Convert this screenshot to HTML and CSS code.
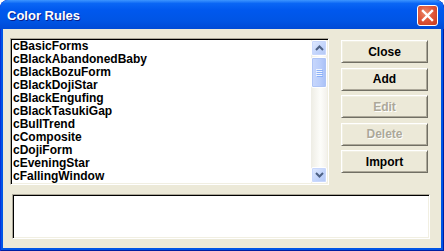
FILE: index.html
```html
<!DOCTYPE html>
<html lang="en">
<head>
    <meta charset="UTF-8">
    <title>Color Rules</title>
    <link rel="stylesheet" href="styles.css">
</head>
<body>
    <div class="window">
        <div class="titlebar">
            <span class="title">Color Rules</span>
            <div class="close-x">
                <svg width="13" height="13" viewBox="0 0 13 13">
                    <path d="M2 2 L11 11 M11 2 L2 11" stroke="#fff" stroke-width="2.4" stroke-linecap="square"/>
                </svg>
            </div>
        </div>
        <div class="client">
            <div class="top-row">
                <div class="listbox">
                    <ul class="items">
                        <li>cBasicForms</li>
                        <li>cBlackAbandonedBaby</li>
                        <li>cBlackBozuForm</li>
                        <li>cBlackDojiStar</li>
                        <li>cBlackEngufing</li>
                        <li>cBlackTasukiGap</li>
                        <li>cBullTrend</li>
                        <li>cComposite</li>
                        <li>cDojiForm</li>
                        <li>cEveningStar</li>
                        <li>cFallingWindow</li>
                    </ul>
                    <div class="scrollbar">
                        <div class="sb-btn">
                            <svg width="9" height="6" viewBox="0 0 9 6"><path d="M1 5 L4.5 1.5 L8 5" fill="none" stroke="#4d6185" stroke-width="2"/></svg>
                        </div>
                        <div class="sb-track">
                            <div class="sb-thumb">
                                <span></span><span></span><span></span><span></span>
                            </div>
                        </div>
                        <div class="sb-btn">
                            <svg width="9" height="6" viewBox="0 0 9 6"><path d="M1 1 L4.5 4.5 L8 1" fill="none" stroke="#4d6185" stroke-width="2"/></svg>
                        </div>
                    </div>
                </div>
                <div class="buttons">
                    <button class="btn">Close</button>
                    <button class="btn">Add</button>
                    <button class="btn" disabled>Edit</button>
                    <button class="btn" disabled>Delete</button>
                    <button class="btn">Import</button>
                </div>
            </div>
            <div class="memo"></div>
        </div>
    </div>
</body>
</html>
```

FILE: styles.css
```css
* {
    margin: 0;
    padding: 0;
    box-sizing: border-box;
}
body {
    font-family: 'Liberation Sans', Arial, sans-serif;
    background: #fff;
}
.window {
    width: 444px;
    height: 251px;
    display: flex;
    flex-direction: column;
    background: #0055e6;
    border-radius: 8px 8px 0 0;
    box-shadow: inset 1px 0 #0831d9, inset -1px 0 #001ea0, inset 0 -1px #001ea0;
    overflow: hidden;
}
.titlebar {
    height: 29px;
    display: flex;
    align-items: center;
    justify-content: space-between;
    padding: 0 6px 0 7px;
    background: linear-gradient(180deg, #3d95ff 0%, #0a66f5 12%, #0058ee 35%, #0055e5 70%, #004ad6 100%);
    border-radius: 8px 8px 0 0;
}
.title {
    color: #fff;
    font-weight: bold;
    font-size: 13px;
    text-shadow: 1px 1px #0a1e8a;
    margin-top: 1px;
}
.close-x {
    width: 21px;
    height: 21px;
    border: 1px solid #fff;
    border-radius: 3px;
    display: flex;
    align-items: center;
    justify-content: center;
    background: radial-gradient(circle at 40% 35%, #ea8b6b 0%, #e0573a 45%, #c6391c 100%);
    margin-top: 2px;
}
.client {
    flex: 1;
    margin: 0 3px 3px;
    background: #ece9d8;
    padding: 9px 13px 9px 7px;
    display: flex;
    flex-direction: column;
}
.top-row {
    display: flex;
    gap: 12px;
}
.listbox {
    width: 319px;
    height: 147px;
    display: flex;
    background: #fff;
    border: 1px solid;
    border-color: #aca899 #fff #fff #aca899;
    box-shadow: inset 1px 1px #000, inset -1px -1px #f1efe2;
    padding: 1px;
}
.items {
    list-style: none;
    flex: 1;
    padding-left: 1px;
}
.items li {
    height: 13px;
    line-height: 13px;
    font-size: 12px;
    font-weight: bold;
    color: #000;
    white-space: nowrap;
}
.scrollbar {
    width: 16px;
    display: flex;
    flex-direction: column;
    background: linear-gradient(90deg, #eeede5, #fdfdfa 60%, #f3f1ec);
}
.sb-btn {
    height: 16px;
    display: flex;
    align-items: center;
    justify-content: center;
    border: 1px solid #fff;
    border-radius: 2px;
    background: linear-gradient(135deg, #e1eafe, #c1d3fb 60%, #b4c8f6);
    box-shadow: inset 0 0 0 1px #c8d7fc;
}
.sb-track {
    flex: 1;
    padding-top: 1px;
}
.sb-thumb {
    height: 31px;
    border: 1px solid #fff;
    border-radius: 2px;
    background: linear-gradient(90deg, #c9d8fc, #b9cdfb 60%, #a9c0f6);
    box-shadow: inset 0 0 0 1px #aec4f6;
    display: flex;
    flex-direction: column;
    align-items: center;
    justify-content: center;
    gap: 1px;
}
.sb-thumb span {
    width: 6px;
    height: 1px;
    background: #eef4fe;
    box-shadow: 1px 1px #8cb0f8;
}
.buttons {
    width: 87px;
    padding-top: 2px;
    display: flex;
    flex-direction: column;
    gap: 4.5px;
}
.btn {
    height: 23px;
    font-family: 'Liberation Sans', Arial, sans-serif;
    font-size: 12px;
    font-weight: bold;
    color: #000;
    background: #ece9d8;
    border: 1px solid;
    border-color: #fff #716f64 #716f64 #fff;
    box-shadow: inset 1px 1px #f1efe2, inset -1px -1px #aca899;
}
.btn:disabled {
    color: #aca899;
    text-shadow: 1px 1px #fff;
}
.memo {
    margin: 9px -2px 0 2px;
    height: 45px;
    background: #fff;
    border: 1px solid;
    border-color: #aca899 #fff #fff #aca899;
    box-shadow: inset 1px 1px #000, inset -1px -1px #f1efe2;
}
```
